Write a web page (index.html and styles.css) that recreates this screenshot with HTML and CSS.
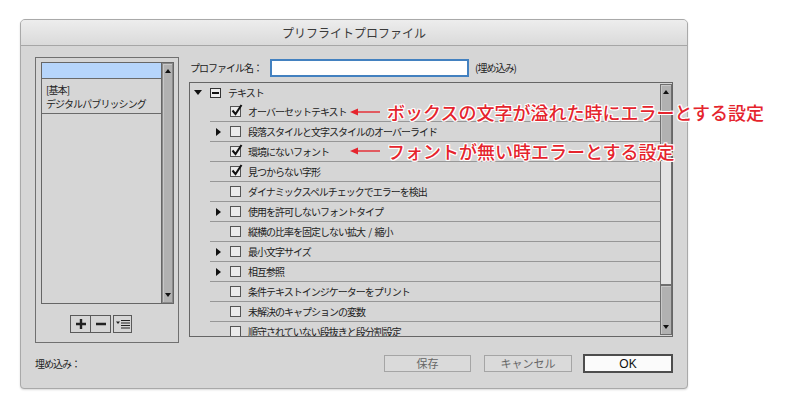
FILE: index.html
```html
<!DOCTYPE html>
<html lang="ja">
<head>
    <meta charset="UTF-8">
    <title>プリフライトプロファイル</title>
    <link rel="stylesheet" href="styles.css">
</head>
<body>
    <div class="dialog">
        <div class="titlebar">プリフライトプロファイル</div>
        <div class="main">
            <div class="profiles">
                <div class="profile-list">
                    <div class="list-items">
                        <div class="list-row selected"></div>
                        <div class="list-group">
                            <div class="list-row">[基本]</div>
                            <div class="list-row">デジタルパブリッシング</div>
                        </div>
                    </div>
                    <div class="scrollbar">
                        <div class="scroll-part dark grow">
                            <span class="tri-up"></span>
                            <span class="tri-down"></span>
                        </div>
                    </div>
                </div>
                <div class="list-tools">
                    <div class="tool-pair">
                        <div class="tool">
                            <svg width="12" height="12" viewBox="0 0 12 12"><path d="M6 1v10M1 6h10" stroke="#222" stroke-width="2.4"/></svg>
                        </div>
                        <div class="tool">
                            <svg width="12" height="12" viewBox="0 0 12 12"><path d="M1 6h10" stroke="#222" stroke-width="2.4"/></svg>
                        </div>
                    </div>
                    <div class="tool single">
                        <svg width="14" height="10" viewBox="0 0 14 10"><path d="M0 2.5h4L2 5z" fill="#222"/><path d="M5 1.5h9M5 4h9M5 6.5h9M5 9h9" stroke="#222" stroke-width="1"/></svg>
                    </div>
                </div>
            </div>

            <div class="settings">
                <div class="name-row">
                    <label class="name-label" for="profileName">プロファイル名：</label>
                    <input type="text" id="profileName" class="name-input">
                    <span class="name-note">(埋め込み)</span>
                </div>
                <div class="tree">
                    <div class="tree-rows">
                        <div class="tree-head">
                            <span class="slot"><span class="tri-open"></span></span>
                            <span class="minus-box"></span>
                            <span class="row-text">テキスト</span>
                        </div>
                        <div class="tree-row">
                            <span class="slot"></span>
                            <span class="check on"><svg width="13" height="13" viewBox="0 0 13 13"><path d="M2.5 6.5l3 3.5 6-9" fill="none" stroke="#111" stroke-width="2"/></svg></span>
                            <span class="row-text">オーバーセットテキスト</span>
                        </div>
                        <div class="tree-row">
                            <span class="slot"><span class="tri-closed"></span></span>
                            <span class="check"></span>
                            <span class="row-text">段落スタイルと文字スタイルのオーバーライド</span>
                        </div>
                        <div class="tree-row">
                            <span class="slot"></span>
                            <span class="check on"><svg width="13" height="13" viewBox="0 0 13 13"><path d="M2.5 6.5l3 3.5 6-9" fill="none" stroke="#111" stroke-width="2"/></svg></span>
                            <span class="row-text">環境にないフォント</span>
                        </div>
                        <div class="tree-row">
                            <span class="slot"></span>
                            <span class="check on"><svg width="13" height="13" viewBox="0 0 13 13"><path d="M2.5 6.5l3 3.5 6-9" fill="none" stroke="#111" stroke-width="2"/></svg></span>
                            <span class="row-text">見つからない字形</span>
                        </div>
                        <div class="tree-row">
                            <span class="slot"></span>
                            <span class="check"></span>
                            <span class="row-text">ダイナミックスペルチェックでエラーを検出</span>
                        </div>
                        <div class="tree-row">
                            <span class="slot"><span class="tri-closed"></span></span>
                            <span class="check"></span>
                            <span class="row-text">使用を許可しないフォントタイプ</span>
                        </div>
                        <div class="tree-row">
                            <span class="slot"></span>
                            <span class="check"></span>
                            <span class="row-text spaced">縦横の比率を固定しない拡大 / 縮小</span>
                        </div>
                        <div class="tree-row">
                            <span class="slot"><span class="tri-closed"></span></span>
                            <span class="check"></span>
                            <span class="row-text">最小文字サイズ</span>
                        </div>
                        <div class="tree-row">
                            <span class="slot"><span class="tri-closed"></span></span>
                            <span class="check"></span>
                            <span class="row-text">相互参照</span>
                        </div>
                        <div class="tree-row">
                            <span class="slot"></span>
                            <span class="check"></span>
                            <span class="row-text">条件テキストインジケーターをプリント</span>
                        </div>
                        <div class="tree-row">
                            <span class="slot"></span>
                            <span class="check"></span>
                            <span class="row-text">未解決のキャプションの変数</span>
                        </div>
                        <div class="tree-row">
                            <span class="slot"></span>
                            <span class="check"></span>
                            <span class="row-text">順守されていない段抜きと段分割設定</span>
                        </div>
                    </div>
                    <div class="scrollbar tree-scroll">
                        <div class="scroll-part dark thumb"><span class="tri-up"></span></div>
                        <div class="scroll-part light grow"></div>
                        <div class="scroll-part dark end"><span class="tri-down"></span></div>
                    </div>
                </div>
            </div>
        </div>
        <div class="footer">
            <span class="footer-label">埋め込み：</span>
            <button class="btn disabled save">保存</button>
            <button class="btn disabled cancel">キャンセル</button>
            <button class="btn ok">OK</button>
        </div>
    </div>

    <!-- callouts drawn over the screenshot -->
    <div class="note note-overset">
        <svg width="30" height="10" viewBox="0 0 30 10"><path d="M5 5h25" stroke="#e5242d" stroke-width="1.4"/><path d="M0 5l8-3.5v7z" fill="#e5242d"/></svg>
        <span class="note-text">ボックスの文字が溢れた時にエラーとする設定</span>
    </div>
    <div class="note note-font">
        <svg width="30" height="10" viewBox="0 0 30 10"><path d="M5 5h25" stroke="#e5242d" stroke-width="1.4"/><path d="M0 5l8-3.5v7z" fill="#e5242d"/></svg>
        <span class="note-text">フォントが無い時エラーとする設定</span>
    </div>
</body>
</html>
```

FILE: styles.css
```css
body {
    margin: 0;
    padding: 19px 0 0 20px;
    background-color: #ffffff;
    font-family: "Noto Sans CJK JP", "Noto Sans", sans-serif;
    font-size: 10px;
    color: #222;
    position: relative;
    height: 410px;
    box-sizing: border-box;
    overflow: hidden;
}
.dialog {
    width: 668px;
    height: 370px;
    box-sizing: border-box;
    background-color: #d6d6d6;
    border: 1px solid #a9a9a9;
    border-radius: 5px 5px 4px 4px;
    box-shadow: 0 1px 2px rgba(0, 0, 0, 0.15);
    display: flex;
    flex-direction: column;
    overflow: hidden;
}
.titlebar {
    height: 25px;
    line-height: 25px;
    text-align: center;
    font-size: 12px;
    color: #3a3a3a;
    background: linear-gradient(#ededed, #dadada);
    border-bottom: 1px solid #a6a6a6;
}
.main {
    display: flex;
    gap: 10px;
    padding: 11px 14px 0 14px;
}

/* left: profile list */
.profiles {
    width: 144px;
    height: 286px;
    box-sizing: border-box;
    border: 1px solid #707070;
    padding: 4px 4px 0 5px;
}
.profile-list {
    height: 242px;
    box-sizing: border-box;
    border: 1px solid #666;
    display: flex;
}
.list-items {
    flex: 1;
}
.list-row {
    height: 14px;
    line-height: 14px;
    padding-left: 4px;
    letter-spacing: -0.9px;
    white-space: nowrap;
}
.list-row.selected {
    height: 15px;
    background-color: #b6d5fb;
    border-bottom: 1px solid #6a6a6a;
}
.list-group {
    padding-top: 4px;
    padding-bottom: 2px;
    border-bottom: 1px solid #6a6a6a;
}
.list-tools {
    display: flex;
    gap: 2px;
    margin: 11px 0 0 29px;
}
.tool-pair {
    display: flex;
    border: 1px solid #5a5a5a;
}
.tool {
    width: 19px;
    height: 16px;
    display: flex;
    align-items: center;
    justify-content: center;
}
.tool-pair .tool + .tool {
    border-left: 1px solid #5a5a5a;
}
.tool.single {
    border: 1px solid #5a5a5a;
    width: 17px;
}

/* scrollbars */
.scrollbar {
    width: 12px;
    box-sizing: border-box;
    display: flex;
    flex-direction: column;
    border-left: 1px solid #666;
}
.scroll-part {
    position: relative;
    box-sizing: border-box;
    border: 1px solid #8a8a8a;
}
.scroll-part.dark {
    background-color: #b1b1b1;
    box-shadow: inset 1px 1px 0 #c8c8c8;
}
.scroll-part.light {
    background-color: #e3e3e3;
}
.scroll-part.grow {
    flex: 1;
}
.tri-up,
.tri-down {
    position: absolute;
    left: 2px;
    width: 0;
    height: 0;
    border-left: 3px solid transparent;
    border-right: 3px solid transparent;
}
.tri-up {
    top: 5px;
    border-bottom: 4px solid #111;
}
.tri-down {
    bottom: 5px;
    border-top: 4px solid #111;
}

/* right: settings */
.settings {
    width: 484px;
    display: flex;
    flex-direction: column;
}
.name-row {
    display: flex;
    align-items: center;
    height: 19px;
    padding-top: 1px;
}
.name-label {
    width: 80px;
    padding-left: 1px;
    letter-spacing: -1px;
}
.name-input {
    width: 199px;
    height: 18px;
    box-sizing: border-box;
    margin: 0;
    border: 2px solid #4381c0;
    background-color: #fff;
    outline: none;
}
.name-note {
    margin-left: 6px;
    letter-spacing: -1px;
}
.tree {
    margin-top: 5px;
    height: 255px;
    box-sizing: border-box;
    border: 1px solid #666;
    display: flex;
}
.tree-rows {
    flex: 1;
    overflow: hidden;
}
.tree-head,
.tree-row {
    display: flex;
    align-items: center;
    height: 19px;
    white-space: nowrap;
}
.tree-row {
    margin-left: 20px;
    border-bottom: 1px solid #979797;
}
.slot {
    width: 20px;
    height: 19px;
    display: flex;
    align-items: center;
    flex: none;
}
.tri-open {
    margin-left: 4px;
    width: 0;
    height: 0;
    border-left: 4px solid transparent;
    border-right: 4px solid transparent;
    border-top: 5px solid #111;
}
.tri-closed {
    margin-left: 6px;
    width: 0;
    height: 0;
    border-top: 4px solid transparent;
    border-bottom: 4px solid transparent;
    border-left: 5px solid #111;
}
.minus-box {
    width: 11px;
    height: 10px;
    box-sizing: border-box;
    border: 1px solid #333;
    background-color: #ececec;
    display: flex;
    align-items: center;
    justify-content: center;
}
.minus-box::after {
    content: "";
    width: 7px;
    height: 2px;
    background-color: #111;
}
.tree-head .row-text {
    margin-left: 7px;
}
.check {
    position: relative;
    width: 11px;
    height: 11px;
    box-sizing: border-box;
    border: 1px solid #555;
    background-color: #ebebeb;
    flex: none;
}
.check svg {
    position: absolute;
    left: -1px;
    top: -3px;
}
.row-text {
    margin-left: 7px;
    letter-spacing: -1px;
    line-height: 19px;
}
.row-text.spaced {
    word-spacing: 2px;
}
.tree-scroll {
    border-left: none;
    margin: 1px 0;
}
.tree-scroll .scroll-part {
    border-color: #6e6e6e;
}
.scroll-part.thumb {
    height: 76px;
}
.scroll-part.end {
    height: 50px;
}

/* footer */
.footer {
    display: flex;
    align-items: center;
    height: 19px;
    margin-top: 11px;
    padding: 0 14px;
}
.footer-label {
    flex: 1;
    letter-spacing: -1px;
}
.btn {
    margin: 0;
    padding: 0;
    box-sizing: border-box;
    font-family: "Noto Sans CJK JP", sans-serif;
    font-size: 11px;
    line-height: 1;
}
.btn.disabled {
    height: 17px;
    background-color: #dadada;
    border: 1px solid #a5a5a5;
    color: #666;
}
.btn.save {
    width: 87px;
}
.btn.cancel {
    width: 88px;
    margin-left: 13px;
}
.btn.ok {
    width: 90px;
    height: 19px;
    margin-left: 11px;
    background-color: #fbfbfb;
    border: 2px solid #4d4d4d;
    color: #111;
    font-family: "Liberation Sans", Arial, sans-serif;
    font-size: 12px;
}

/* callouts */
.note {
    position: absolute;
    left: 350px;
    height: 20px;
    display: flex;
    align-items: center;
    gap: 7px;
}
.note-overset {
    top: 102px;
}
.note-font {
    top: 141px;
}
.note-text {
    font-size: 18px;
    font-weight: 500;
    line-height: 20px;
    color: #e5242d;
    white-space: nowrap;
    text-shadow: 1px 0 0 #fff, -1px 0 0 #fff, 0 1px 0 #fff, 0 -1px 0 #fff,
        1px 1px 0 #fff, -1px -1px 0 #fff, 1px -1px 0 #fff, -1px 1px 0 #fff;
}
```
